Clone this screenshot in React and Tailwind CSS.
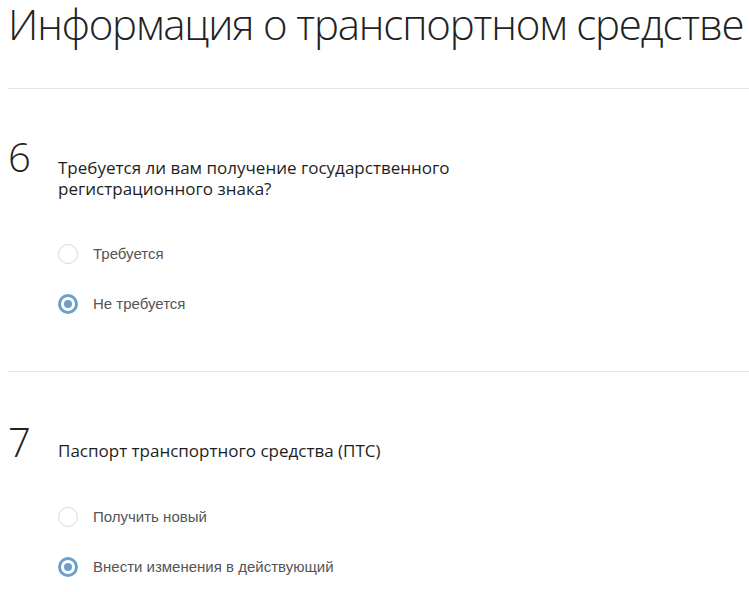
const Radio = ({ checked, label }) => (
  <div className="flex items-center h-5">
    {checked ? (
      <span className="w-5 h-5 rounded-full border-[3px] border-[#6b9fcc] flex items-center justify-center">
        <span className="w-2 h-2 rounded-full bg-[#6b9fcc]" />
      </span>
    ) : (
      <span className="w-5 h-5 rounded-full border border-[#d9d9d9]" />
    )}
    <span className="ml-[15px] text-[15px] text-[#555] font-['Liberation_Sans',Arial,sans-serif]">
      {label}
    </span>
  </div>
)

const Question = ({ num, lines, options, numTop, textTop, optTop }) => (
  <section className="border-b border-[#e5e5e5] pb-[57px]">
    <div className="flex items-start" style={{ marginTop: numTop }}>
      <div className="w-[50px] text-[40px] leading-[40px] font-light text-[#222] font-['Open_Sans',sans-serif]">
        {num}
      </div>
      <div
        className="text-[17px] leading-[21px] text-[#1e1e1e] font-['Open_Sans',sans-serif]"
        style={{ marginTop: textTop }}
      >
        {lines.map((l) => (
          <div key={l}>{l}</div>
        ))}
      </div>
    </div>
    <div className="ml-[50px] flex flex-col gap-[30px]" style={{ marginTop: optTop }}>
      {options.map((o) => (
        <Radio key={o.label} {...o} />
      ))}
    </div>
  </section>
)

export default function App() {
  return (
    <div className="w-[749px] h-[592px] overflow-hidden bg-white pl-2">
      <h1 className="h-[89px] border-b border-[#e5e5e5] text-[42px] leading-[48px] font-light tracking-[-1.15px] text-[#222] font-['Open_Sans',sans-serif] whitespace-nowrap">
        Информация о транспортном средстве
      </h1>
      <Question
        num="6"
        numTop={48}
        textTop={20}
        optTop={45}
        lines={['Требуется ли вам получение государственного', 'регистрационного знака?']}
        options={[
          { label: 'Требуется', checked: false },
          { label: 'Не требуется', checked: true },
        ]}
      />
      <Question
        num="7"
        numTop={50}
        textTop={18}
        optTop={45}
        lines={['Паспорт транспортного средства (ПТС)']}
        options={[
          { label: 'Получить новый', checked: false },
          { label: 'Внести изменения в действующий', checked: true },
        ]}
      />
    </div>
  )
}
